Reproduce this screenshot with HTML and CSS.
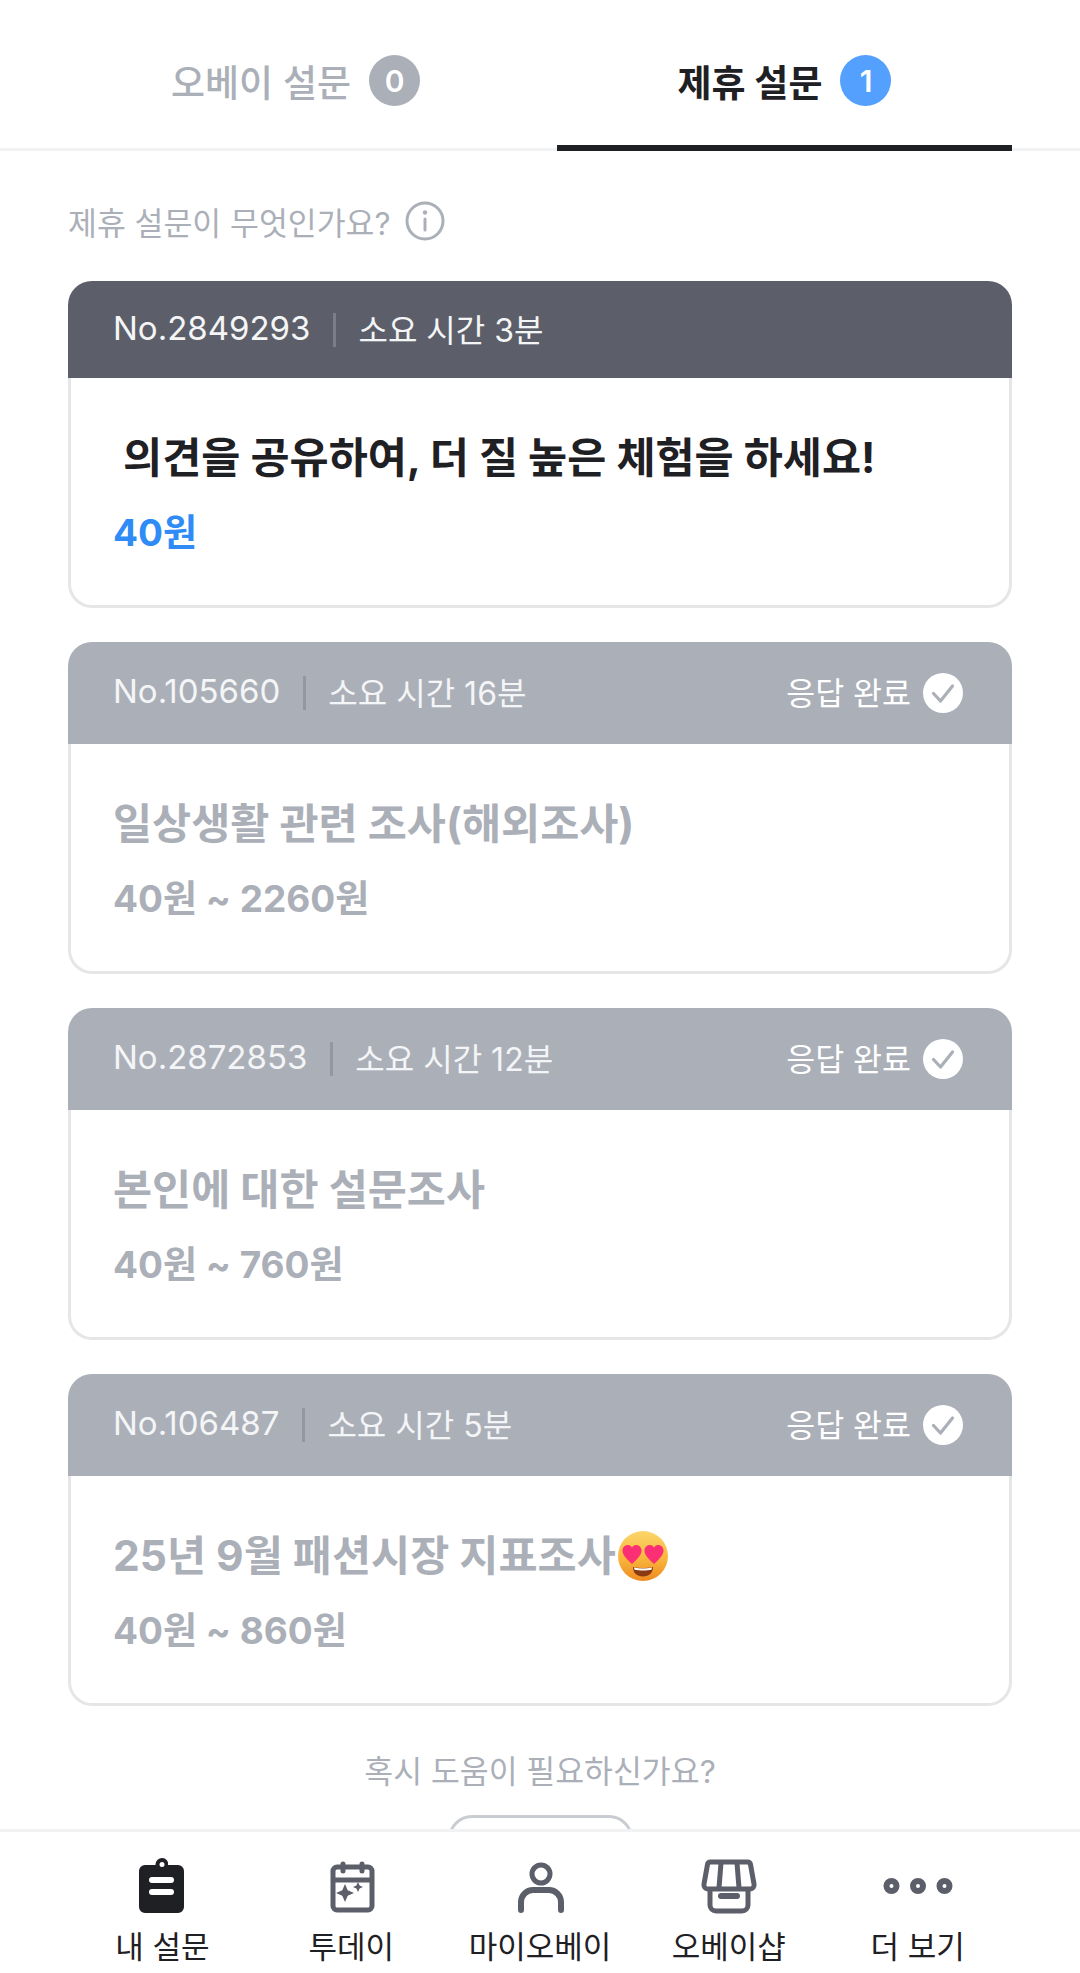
FILE: index.html
```html
<!DOCTYPE html>
<html lang="ko">
<head>
<meta charset="utf-8">
<title>내 설문</title>
<link rel="stylesheet" href="styles.css">
</head>
<body>
<div class="app">
  <div class="tabs">
    <div class="tab"><span>오베이 설문</span><span class="badge badge-grey">0</span></div>
    <div class="tab tab-active"><span>제휴 설문</span><span class="badge badge-blue">1</span></div>
  </div>
  <main class="content">
    <div class="help-line">
      <span>제휴 설문이 무엇인가요?</span>
      <svg class="info" viewBox="0 0 40 40"><circle cx="20" cy="20" r="18" fill="none" stroke="#abafb8" stroke-width="3"/><circle cx="20" cy="11.5" r="2.2" fill="#abafb8"/><rect x="18.5" y="16.5" width="3" height="14" rx="1.5" fill="#abafb8"/></svg>
    </div>

    <section class="card card-open">
      <header class="card-head">
        <span class="lbl no">No.2849293</span><i class="sep"></i><span class="lbl">소요 시간 3분</span>
      </header>
      <div class="card-body">
        <div class="title"> 의견을 공유하여, 더 질 높은 체험을 하세요!</div>
        <div class="price">40원</div>
      </div>
    </section>

    <section class="card card-done">
      <header class="card-head">
        <span class="lbl no">No.105660</span><i class="sep"></i><span class="lbl">소요 시간 16분</span>
        <span class="done"><span class="lbl">응답 완료</span><svg class="check" viewBox="0 0 40 40"><circle cx="20" cy="20" r="20" fill="#fff"/><path d="M10.500 20.500l7 7.500 12-15" fill="none" stroke="#abafb8" stroke-width="3.200" stroke-linecap="round" stroke-linejoin="round"/></svg></span>
      </header>
      <div class="card-body">
        <div class="title">일상생활 관련 조사(해외조사)</div>
        <div class="price">40원 ~ 2260원</div>
      </div>
    </section>

    <section class="card card-done">
      <header class="card-head">
        <span class="lbl no">No.2872853</span><i class="sep"></i><span class="lbl">소요 시간 12분</span>
        <span class="done"><span class="lbl">응답 완료</span><svg class="check" viewBox="0 0 40 40"><circle cx="20" cy="20" r="20" fill="#fff"/><path d="M10.500 20.500l7 7.500 12-15" fill="none" stroke="#abafb8" stroke-width="3.200" stroke-linecap="round" stroke-linejoin="round"/></svg></span>
      </header>
      <div class="card-body">
        <div class="title">본인에 대한 설문조사</div>
        <div class="price">40원 ~ 760원</div>
      </div>
    </section>

    <section class="card card-done">
      <header class="card-head">
        <span class="lbl no">No.106487</span><i class="sep"></i><span class="lbl">소요 시간 5분</span>
        <span class="done"><span class="lbl">응답 완료</span><svg class="check" viewBox="0 0 40 40"><circle cx="20" cy="20" r="20" fill="#fff"/><path d="M10.500 20.500l7 7.500 12-15" fill="none" stroke="#abafb8" stroke-width="3.200" stroke-linecap="round" stroke-linejoin="round"/></svg></span>
      </header>
      <div class="card-body">
        <div class="title">25년 9월 패션시장 지표조사<svg class="emoji" viewBox="0 0 50 50">
          <defs><linearGradient id="face" x1="0" y1="0" x2="0" y2="1"><stop offset="0" stop-color="#fbd66a"/><stop offset="0.55" stop-color="#f9b63d"/><stop offset="1" stop-color="#ef8a1f"/></linearGradient></defs>
          <circle cx="25" cy="25" r="25" fill="url(#face)"/>
          <path d="M14 33C9 28 4 24 4.500 19c.5-5 7-7 9.500-2.500C16.500 12 23 14 23.500 19 24 24 19 28 14 33z" fill="#fb2f73"/>
          <path d="M36 33c-5-5-10-9-9.500-14 .5-5 7-7 9.500-2.500C38.500 12 45 14 45.500 19 46 24 41 28 36 33z" fill="#fb2f73"/>
          <path d="M15 36c6 1.500 14 1.500 20 0 0 6-4 9.500-10 9.500s-10-3.500-10-9.500z" fill="#8a3a12"/>
          <path d="M16 36.500c6 1.200 12 1.200 18 0l-.5 2.200c-5 1-12 1-17 0z" fill="#fff"/>
        </svg></div>
        <div class="price">40원 ~ 860원</div>
      </div>
    </section>

    <div class="support">
      <p class="support-text">혹시 도움이 필요하신가요?</p>
      <div class="support-btn"></div>
    </div>
  </main>
  <nav class="nav">
    <div class="nav-item nav-active">
      <svg class="nav-icon" viewBox="0 0 60 60"><path fill-rule="evenodd" fill="#1f2024" d="M30 2a6.500 6.500 0 0 1 6 4.500V9h10a6 6 0 0 1 6 6v36a6 6 0 0 1-6 6H13a6 6 0 0 1-6-6V15a6 6 0 0 1 6-6h10.500V8A6.500 6.500 0 0 1 30 2zm0 4a2.500 2.500 0 1 0 0 5 2.500 2.500 0 0 0 0-5z"/><rect x="17" y="21" width="25" height="6" rx="3" fill="#fff"/><rect x="17" y="33" width="25" height="6" rx="3" fill="#fff"/></svg>
      <span>내 설문</span>
    </div>
    <div class="nav-item">
      <svg class="nav-icon" viewBox="0 0 60 60"><rect x="12" y="11" width="39" height="43" rx="4" fill="none" stroke="#5c5f69" stroke-width="5"/><path d="M12 24h39" stroke="#5c5f69" stroke-width="5"/><path d="M22 8v7M41 8v7" stroke="#5c5f69" stroke-width="5" stroke-linecap="round"/><path d="M24 28l2.700 6.300L33 37l-6.300 2.700L24 46l-2.700-6.300L15 37l6.300-2.700z" fill="#5c5f69"/><path d="M37 26l1.600 3.400L42 31l-3.400 1.600L37 36l-1.600-3.400L32 31l3.400-1.600z" fill="#5c5f69"/></svg>
      <span>투데이</span>
    </div>
    <div class="nav-item">
      <svg class="nav-icon" viewBox="0 0 60 60"><circle cx="31" cy="18" r="9" fill="none" stroke="#5c5f69" stroke-width="5"/><path d="M11 54v-8a12 12 0 0 1 12-12h16a12 12 0 0 1 12 12v8" fill="none" stroke="#5c5f69" stroke-width="6" stroke-linecap="round"/></svg>
      <span>마이오베이</span>
    </div>
    <div class="nav-item">
      <svg class="nav-icon" viewBox="0 0 60 60"><path d="M11.500 6h37a3 3 0 0 1 3 2.500L55 28a4 4 0 0 1-4 5H9a4 4 0 0 1-4-5l3.500-19.500a3 3 0 0 1 3-2.500z" fill="none" stroke="#5c5f69" stroke-width="5" stroke-linejoin="round"/><path d="M22 7l-2 25M38 7l2 25" stroke="#5c5f69" stroke-width="5"/><path d="M11 31v18a6 6 0 0 0 6 6h26a6 6 0 0 0 6-6V31" fill="none" stroke="#5c5f69" stroke-width="5"/><rect x="19" y="37" width="22" height="6" rx="3" fill="#5c5f69"/></svg>
      <span>오베이샵</span>
    </div>
    <div class="nav-item">
      <svg class="nav-icon" viewBox="0 0 60 60"><g fill="none" stroke="#5c5f69" stroke-width="6"><circle cx="3.500" cy="30" r="5"/><circle cx="30" cy="30" r="5"/><circle cx="56.500" cy="30" r="5"/></g></svg>
      <span>더 보기</span>
    </div>
  </nav>
</div>
</body>
</html>
```
FILE: styles.css
```css
* { box-sizing: border-box; }
html, body { margin: 0; padding: 0; background: #fff; }
body {
  font-family: Inter, "Noto Sans CJK KR", sans-serif;
  color: #1f2024;
}
.app {
  width: 1080px;
  height: 1973px;
  display: flex;
  flex-direction: column;
  overflow: hidden;
}
.tabs {
  display: grid;
  grid-template-columns: 455px 455px;
  column-gap: 34px;
  height: 151px;
  padding: 0 68px;
  border-bottom: 3px solid #f1f2f3;
  flex: none;
}
.tab {
  height: 151px;
  display: flex;
  align-items: center;
  justify-content: center;
  gap: 18px;
  padding-top: 10px;
  font-size: 37px;
  font-weight: 500;
  color: #abafb8;
}
.tab-active {
  color: #1f2024;
  font-weight: 700;
  border-bottom: 6px solid #1f2024;
  padding-top: 16px;
}
.badge {
  width: 51px;
  height: 51px;
  border-radius: 50%;
  display: flex;
  align-items: center;
  justify-content: center;
  color: #fff;
  font-size: 30px;
  font-weight: 600;
}
.badge-grey { background: #abafb8; }
.badge-blue { background: #54a0ff; }
.content {
  flex: 1;
  min-height: 0;
  overflow: hidden;
  padding: 49px 68px 0;
}
.help-line {
  display: flex;
  align-items: center;
  gap: 14px;
  height: 42px;
  margin-bottom: 39px;
  font-size: 31.4px;
  color: #abafb8;
}
.info { width: 40px; height: 40px; flex: none; }
.card {
  display: flex;
  flex-direction: column;
  margin-bottom: 34px;
  height: 332px;
}
.card-open { height: 327px; }
.card-head {
  flex: none;
  height: 102px;
  padding: 0 49px 0 45px;
  border-radius: 24px 24px 0 0;
  display: flex;
  align-items: center;
  font-size: 32px;
  color: #f4f5f6;
  background: #abafb8;
}
.card-open .card-head { background: #5c5f69; height: 97px; }
.lbl { padding-bottom: 4px; }
.no { font-size: 33px; }
.sep {
  width: 3px;
  height: 34px;
  margin: 0 22px 0 23px;
  background: #9297a1;
}
.card-open .sep { background: #7b7e88; }
.done {
  margin-left: auto;
  display: flex;
  align-items: center;
  gap: 12px;
  font-size: 31.5px;
  color: #fff;
}
.check { width: 40px; height: 40px; flex: none; }
.card-body {
  flex: 1;
  padding: 57px 42px 0;
  border: 3px solid #e5e6e8;
  border-top: 0;
  border-radius: 0 0 24px 24px;
  background: #fff;
}
.title {
  font-size: 42.5px;
  line-height: 46px;
  height: 46px;
  font-weight: 700;
  white-space: pre;
  color: #abafb8;
  display: flex;
  align-items: center;
}
.price {
  margin-top: 30px;
  font-size: 37px;
  line-height: 44px;
  font-weight: 700;
  color: #abafb8;
}
.card-open .title { color: #1f2024; }
.card-open .price { color: #2f8bf5; }
.emoji { width: 50px; height: 50px; flex: none; margin-left: 2px; }
.support {
  display: flex;
  flex-direction: column;
  align-items: center;
  padding-top: 11px;
}
.support-text {
  margin: 0;
  font-size: 31.4px;
  line-height: 42px;
  color: #abafb8;
}
.support-btn {
  width: 185px;
  height: 60px;
  margin-top: 22px;
  border: 3px solid #c9ccd1;
  border-radius: 24px;
}
.nav {
  flex: none;
  height: 144px;
  border-top: 3px solid #f1f2f3;
  padding: 0 68px;
  display: grid;
  grid-template-columns: repeat(5, 1fr);
  background: #fff;
}
.nav-item {
  display: flex;
  flex-direction: column;
  align-items: center;
  padding-top: 24px;
  font-size: 31px;
  line-height: 40px;
  white-space: nowrap;
  color: #1f2024;
}
.nav-icon { width: 60px; height: 60px; flex: none; margin-bottom: 11px; overflow: visible; }
```
